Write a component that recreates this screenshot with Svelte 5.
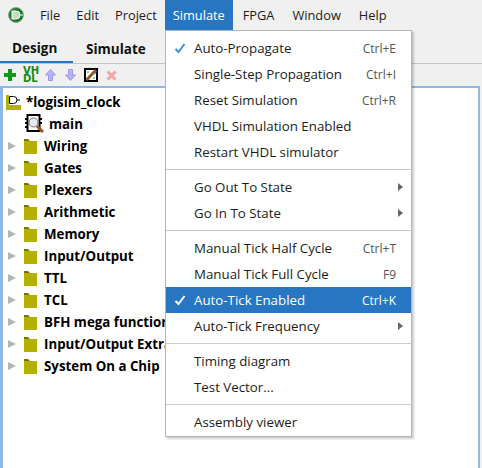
<script>
  const menus = ['File', 'Edit', 'Project', 'Simulate', 'FPGA', 'Window', 'Help'];
  const libs = ['Wiring', 'Gates', 'Plexers', 'Arithmetic', 'Memory', 'Input/Output', 'TTL', 'TCL', 'BFH mega functions', 'Input/Output Extra', 'System On a Chip'];
  const groups = [
    [
      { label: 'Auto-Propagate', key: 'Ctrl+E', checked: true },
      { label: 'Single-Step Propagation', key: 'Ctrl+I' },
      { label: 'Reset Simulation', key: 'Ctrl+R' },
      { label: 'VHDL Simulation Enabled' },
      { label: 'Restart VHDL simulator' }
    ],
    [
      { label: 'Go Out To State', sub: true },
      { label: 'Go In To State', sub: true }
    ],
    [
      { label: 'Manual Tick Half Cycle', key: 'Ctrl+T' },
      { label: 'Manual Tick Full Cycle', key: 'F9' },
      { label: 'Auto-Tick Enabled', key: 'Ctrl+K', checked: true, active: true },
      { label: 'Auto-Tick Frequency', sub: true }
    ],
    [{ label: 'Timing diagram' }, { label: 'Test Vector...' }],
    [{ label: 'Assembly viewer' }]
  ];
</script>

<div class="window">
  <header class="menubar">
    <svg class="logo" width="16" height="16" viewBox="0 0 16 16">
      <circle cx="8" cy="8" r="7.5" fill="#1f7a2c" stroke="#8fa88f" />
      <path d="M4 4h4a4 4 0 0 1 0 8H4z" fill="#bfe0bf" stroke="#fff" />
      <path d="M12 8h3" stroke="#fff" />
    </svg>
    <nav class="menus">
      {#each menus as m}
        <span class="menu" class:open={m === 'Simulate'}>{m}</span>
      {/each}
    </nav>
  </header>

  <div class="tabs">
    <span class="tab selected">Design</span>
    <span class="tab">Simulate</span>
  </div>

  <div class="toolbar">
    <svg class="plus" width="12" height="12" viewBox="0 0 12 12"><path d="M4 0h4v4h4v4H8v4H4V8H0V4h4z" fill="#0f9b1a" /></svg>
    <span class="vhdl">VH DL</span>
    <svg class="up" width="11" height="12" viewBox="0 0 11 12"><path d="M5.5 .5L10.5 6H7.5v5.5h-4V6H.5z" fill="#b4b4f4" stroke="#9a9ae6" /></svg>
    <svg class="down" width="11" height="12" viewBox="0 0 11 12"><path d="M5.5 11.5L10.5 6H7.5V.5h-4V6H.5z" fill="#b4b4f4" stroke="#9a9ae6" /></svg>
    <svg class="edit" width="14" height="14" viewBox="0 0 14 14">
      <rect x="1" y="1" width="12" height="12" fill="#fff" stroke="#000" stroke-width="2" />
      <path d="M3 4h2M10 9v2" stroke="#1fa02a" />
      <path d="M12 3v3" stroke="#2a2ae0" />
      <path d="M2.5 12L12 2" stroke="#8a5a2b" stroke-width="3" />
    </svg>
    <svg class="del" width="11" height="11" viewBox="0 0 11 11"><path d="M1.5 1.5l8 8M9.5 1.5l-8 8" stroke="#f2a6a6" stroke-width="3" /></svg>
  </div>

  <section class="tree">
    <div class="row root">
      <svg width="15" height="15" viewBox="0 0 15 15">
        <path d="M0 0h3v10h12v5H0z" fill="#b4b000" />
        <path d="M3.5 1.5h4a3.5 3.5 0 0 1 0 7h-4zM11 5h3" fill="#fff" stroke="#000" />
      </svg>
      <span>*logisim_clock</span>
    </div>
    <div class="row circuit">
      <svg width="19" height="20" viewBox="0 0 19 20">
        <rect x="2.5" y="1" width="12" height="16" fill="#fff" stroke="#000" stroke-width="2" />
        <path d="M0 5h2M0 9h2M0 13h2M15 5h2M15 9h2" stroke="#000" stroke-width="2" />
        <circle cx="8.5" cy="8.5" r="4.5" fill="#e8e8f8" stroke="#777" />
        <path d="M12 12l6 6" stroke="#a0521a" stroke-width="3" />
      </svg>
      <span>main</span>
    </div>
    {#each libs as lib}
      <div class="row lib">
        <i class="arrow"></i>
        <svg width="13" height="15" viewBox="0 0 13 15">
          <path d="M0 2h13v13H0z" fill="#b4b000" />
          <path d="M0 0h4l2 2H0z" fill="#77750a" />
        </svg>
        <span>{lib}</span>
      </div>
    {/each}
  </section>

  <div class="dropdown">
    {#each groups as group, g}
      {#if g > 0}<hr />{/if}
      {#each group as item}
        <div class="item" class:active={item.active}>
          <span class="check">
            {#if item.checked}
              <svg width="12" height="11" viewBox="0 0 12 11"><path d="M1.5 6l3 3 6-8" fill="none" stroke={item.active ? '#fff' : '#3f8fdc'} stroke-width="2" /></svg>
            {/if}
          </span>
          <span class="label">{item.label}</span>
          {#if item.key}<span class="key">{item.key}</span>{/if}
          {#if item.sub}<i class="more"></i>{/if}
        </div>
      {/each}
    {/each}
  </div>
</div>

<style>
  :global(body) {
    background: #f0f0f0;
  }

  .window {
    position: relative;
    width: 482px;
    height: 468px;
    overflow: hidden;
    background: #f0f0f0;
    font-family: 'Open Sans', 'Noto Sans', sans-serif;
    font-size: 13.3px;
    color: #1c1c1c;
  }

  .menubar {
    display: flex;
    align-items: center;
    height: 30px;
    padding-left: 8px;
  }

  .logo {
    flex: none;
  }

  .menus {
    display: flex;
    height: 100%;
    margin-left: 8px;
    font-size: 12.8px;
  }

  .menu {
    display: flex;
    align-items: center;
    padding: 0 8px;
  }

  .menu.open {
    margin-right: 1px;
    background: #2676c2;
    color: #fff;
  }

  .menu.open ~ .menu {
    padding: 0 9px;
  }

  .tabs {
    display: flex;
    height: 34px;
    border-bottom: 1px solid #c4c4c4;
    box-sizing: border-box;
  }

  .tab {
    display: flex;
    align-items: center;
    padding: 4px 13px 0;
    font-weight: 700;
    font-size: 13.5px;
    color: #111;
  }

  .tab.selected {
    padding-left: 12px;
    border-bottom: 2px solid #2676c2;
    width: 73px;
    box-sizing: border-box;
  }

  .toolbar {
    display: flex;
    align-items: center;
    height: 22px;
    padding-left: 4px;
    box-sizing: border-box;
  }

  .toolbar svg {
    flex: none;
  }

  .vhdl {
    width: min-content;
    margin-left: 7px;
    font-size: 10px;
    line-height: 8px;
    font-weight: 700;
    color: #0f8a1a;
    font-family: 'DejaVu Sans', sans-serif;
  }

  .up {
    margin-left: 6px;
  }

  .down {
    margin-left: 9px;
  }

  .edit {
    margin-left: 8px;
  }

  .del {
    margin-left: 8px;
  }

  .tree {
    height: 382px;
    width: 480px;
    padding: 3px 0 0 3px;
    background: #fff;
    border-style: solid;
    border-color: #8db8e8;
    border-width: 2px 2px 0 3px;
    box-sizing: border-box;
  }

  .row {
    display: flex;
    align-items: center;
    gap: 5px;
    height: 22px;
    font-weight: 700;
    color: #000;
    white-space: nowrap;
  }

  .circuit {
    padding-left: 19px;
  }

  .lib {
    gap: 7px;
    padding-left: 2px;
  }

  .arrow {
    width: 0;
    height: 0;
    margin-right: 1px;
    border-left: 8px solid #b5b5b5;
    border-top: 4.5px solid transparent;
    border-bottom: 4.5px solid transparent;
  }

  .dropdown {
    position: absolute;
    left: 165px;
    top: 30px;
    width: 247px;
    height: 407px;
    padding: 4px 0 0;
    background: #fff;
    border: 1px solid #b5b5b5;
    box-shadow: 2px 2px 2px rgba(0, 0, 0, 0.2);
    box-sizing: border-box;
  }

  .item {
    display: flex;
    align-items: center;
    height: 26px;
  }

  .item.active {
    background: #2676c2;
    color: #fff;
  }

  .check {
    display: flex;
    width: 28px;
    padding-left: 8px;
    box-sizing: border-box;
  }

  .label {
    flex: 1;
  }

  .key {
    margin-right: 15px;
    font-size: 12px;
    color: #555;
  }

  .item.active .key {
    color: #fff;
  }

  .more {
    width: 0;
    height: 0;
    margin-right: 8px;
    border-left: 5px solid #666;
    border-top: 4px solid transparent;
    border-bottom: 4px solid transparent;
  }

  hr {
    margin: 4px 0;
    border: 0;
    border-top: 1px solid #ccc;
  }
</style>
